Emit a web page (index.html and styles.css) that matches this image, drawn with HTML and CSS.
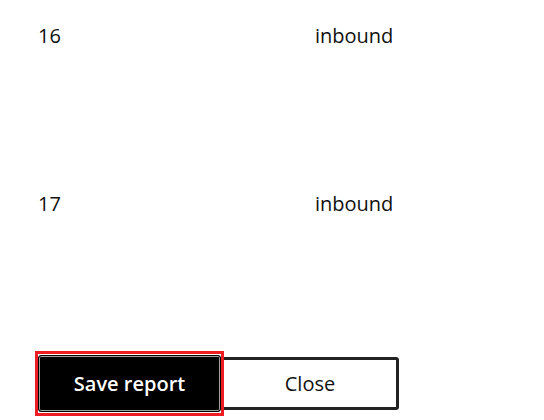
FILE: index.html
```html
<!DOCTYPE html>
<html lang="en">
<head>
<meta charset="utf-8">
<title>Report</title>
<link rel="stylesheet" href="styles.css">
</head>
<body>
<main class="page">
  <div class="rows">
    <div class="row">
      <span class="cell cell-id">16</span>
      <span class="cell cell-dir">inbound</span>
    </div>
    <div class="row">
      <span class="cell cell-id">17</span>
      <span class="cell cell-dir">inbound</span>
    </div>
  </div>
  <div class="actions">
    <button class="btn btn-primary" type="button">Save report</button>
    <button class="btn btn-secondary" type="button">Close</button>
  </div>
</main>
</body>
</html>
```

FILE: styles.css
```css
html, body {
  margin: 0;
  padding: 0;
  background: #ffffff;
}

body {
  font-family: "Open Sans", "Noto Sans", "Liberation Sans", sans-serif;
  color: #111111;
  width: 544px;
  height: 420px;
  overflow: hidden;
}

.page {
  padding: 22px 0 0 38px;
}

.rows {
  display: flex;
  flex-direction: column;
}

.row {
  display: flex;
  height: 168px;
  align-items: flex-start;
}

.cell {
  font-size: 20px;
  line-height: 28px;
}

.cell-id {
  width: 277px;
}

.actions {
  display: flex;
  align-items: center;
  margin-top: -3px;
}

.btn {
  font-family: inherit;
  font-size: 20px;
  box-sizing: border-box;
  border-radius: 3px;
  cursor: pointer;
  padding: 0;
}

.btn-primary {
  position: relative;
  z-index: 1;
  width: 183px;
  height: 57px;
  background: #000000;
  color: #ffffff;
  font-weight: 600;
  border: 1px solid #000000;
  box-shadow: inset 0 0 0 1px #a0a0a0;
}

.btn-primary::after {
  content: "";
  position: absolute;
  top: -5px;
  left: -4px;
  right: -4px;
  bottom: -5px;
  border: 3px solid #ee1d24;
  pointer-events: none;
}

.btn-secondary {
  width: 178px;
  height: 53px;
  background: #ffffff;
  color: #111111;
  border: 3px solid #222222;
}
```
